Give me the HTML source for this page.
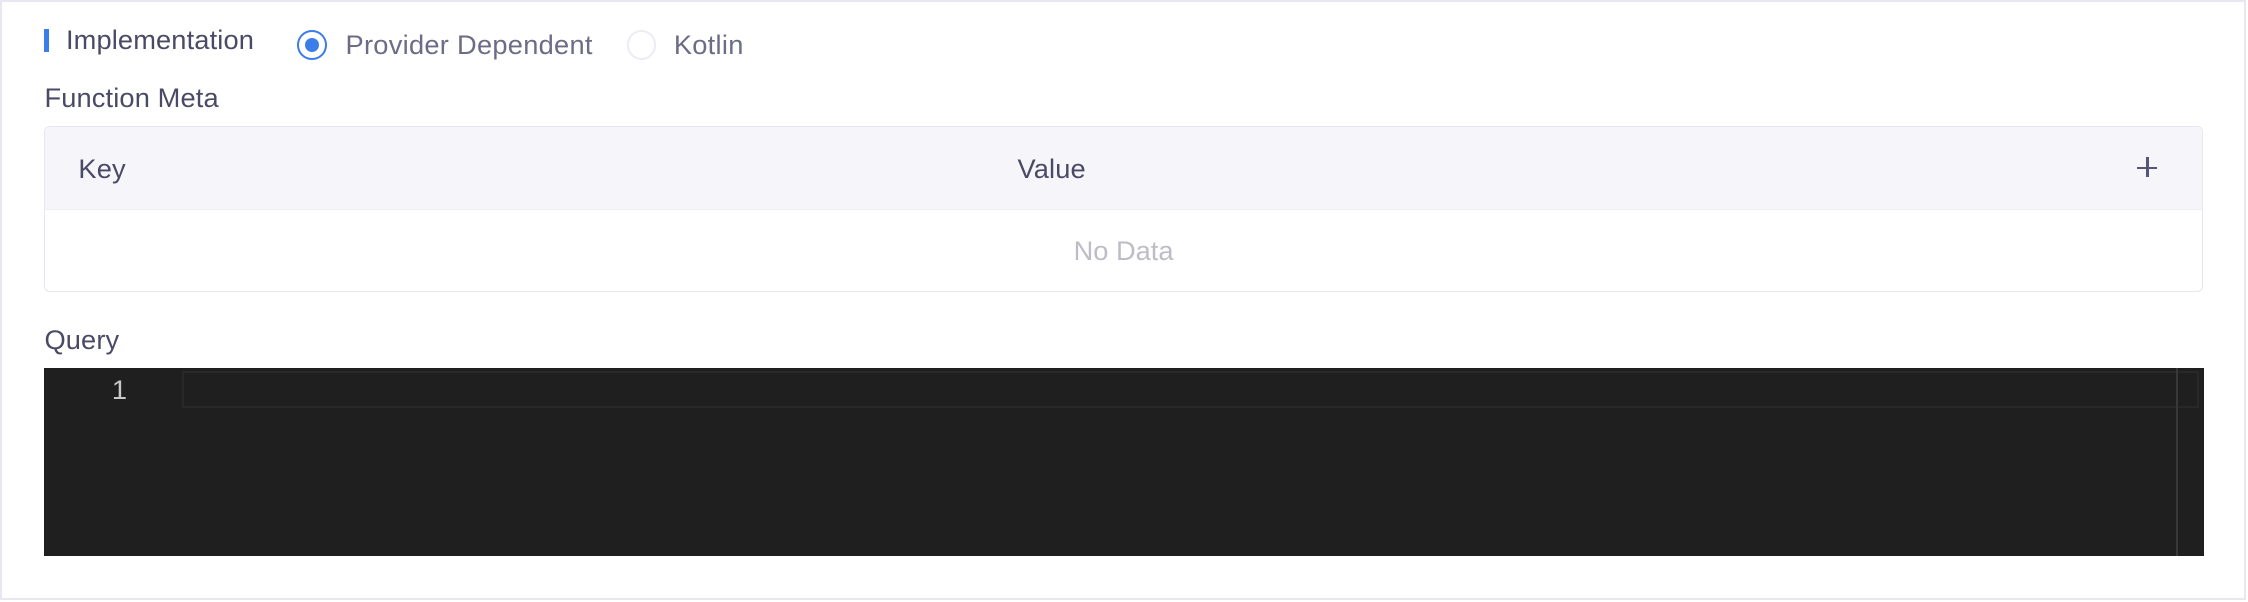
<!DOCTYPE html>
<html><head><meta charset="utf-8"><style>
html,body{margin:0;padding:0;background:#fff;}
body{width:1568px;height:420px;zoom:1.43367;overflow:hidden;position:relative;font-family:"Liberation Sans",Helvetica,Arial,sans-serif;}
.frame{position:absolute;left:0;top:0;width:1564px;height:416px;border:2px solid #e7e7f3;background:#fff;}
.a{position:absolute;white-space:nowrap;}
.lbl{color:#4a4a66;font-size:19px;letter-spacing:0.1px;}
.rl{color:#6c6c86;font-size:19px;letter-spacing:0.2px;}
</style></head><body>
<div class="frame"></div>
<div class="a" style="left:31px;top:20px;width:3px;height:16px;background:#3b7de9"></div>
<div class="a lbl" style="left:46px;top:17px;">Implementation</div>
<div class="a" style="left:207px;top:21px;width:18px;height:18px;border:1.5px solid #3b7de9;border-radius:50%;"></div>
<div class="a" style="left:212.5px;top:26.5px;width:10px;height:10px;background:#3b7de9;border-radius:50%;"></div>
<div class="a rl" style="left:241px;top:20px;">Provider Dependent</div>
<div class="a" style="left:437px;top:21px;width:18px;height:18px;border:1.5px solid #ececf4;border-radius:50%;"></div>
<div class="a rl" style="left:470px;top:20px;">Kotlin</div>
<div class="a lbl" style="left:31px;top:57px;">Function Meta</div>
<div class="a" style="left:31px;top:88px;width:1504px;height:114px;border:1px solid #e6e6f2;border-radius:4px;overflow:hidden;">
  <div style="position:absolute;left:0;top:0;width:100%;height:57px;background:#f6f6fa;border-bottom:1px solid #efeff3;"></div>
  <div class="a lbl" style="left:23px;top:18px;">Key</div>
  <div class="a lbl" style="left:678px;top:18px;">Value</div>
  <div class="a" style="left:1459px;top:28px;width:14px;height:1.5px;background:#55557a;"></div>
  <div class="a" style="left:1465.5px;top:21px;width:1.5px;height:14px;background:#55557a;"></div>
  <div class="a" style="left:0;width:100%;top:75px;text-align:center;color:#bdbdc6;font-size:19px;">No Data</div>
</div>
<div class="a lbl" style="left:31px;top:226px;">Query</div>
<div class="a" style="left:31px;top:257px;width:1506px;height:131px;background:#1f1f1f;">
  <div class="a" style="left:96px;top:2px;width:1404px;height:23px;border:2px solid #282828;"></div>
  <div class="a" style="left:1487px;top:0;width:1px;height:131px;background:#383838;"></div>
  <div class="a" style="left:47px;top:4px;color:#c8c8c8;font-family:'Liberation Sans',sans-serif;font-size:19px;">1</div>
</div>
</body></html>
